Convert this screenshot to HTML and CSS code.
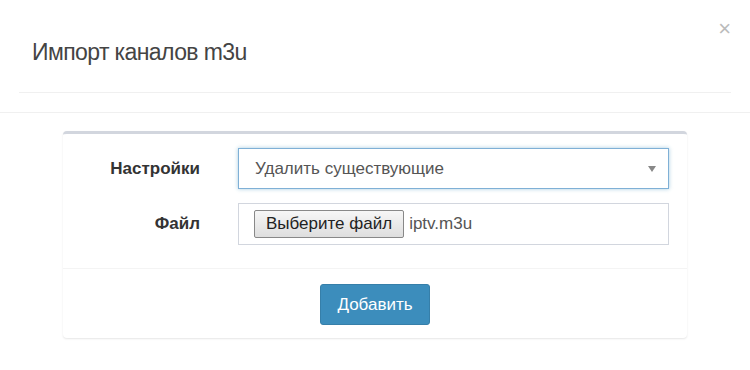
FILE: index.html
```html
<!DOCTYPE html>
<html lang="ru">
  <head>
    <meta charset="UTF-8" />
    <title>Импорт каналов m3u</title>
    <link rel="stylesheet" href="styles.css">
  </head>
  <body>
    <div class="modal">
      <div class="modal-header">
        <h4 class="modal-title">Импорт каналов m3u</h4>
        <button type="button" class="close">&times;</button>
      </div>

      <div class="modal-body">
        <div class="box">
          <div class="box-body">
            <div class="form-row">
              <label class="form-label">Настройки</label>
              <div class="select">
                <span>Удалить существующие</span>
                <span class="caret"></span>
              </div>
            </div>

            <div class="form-row">
              <label class="form-label">Файл</label>
              <div class="file-input">
                <span class="file-button">Выберите файл</span>
                <span class="file-name">iptv.m3u</span>
              </div>
            </div>
          </div>

          <div class="box-footer">
            <button type="submit" class="btn-primary">Добавить</button>
          </div>
        </div>
      </div>
    </div>
  </body>
</html>
```

FILE: styles.css
```css
* {
  margin: 0;
  padding: 0;
  box-sizing: border-box;
}

body {
  font-family: "Liberation Sans", Arial, sans-serif;
  background: #fff;
  color: #333;
  width: 750px;
  height: 370px;
  overflow: hidden;
}

.modal-header {
  position: relative;
  margin: 0 19px;
  padding: 39px 13px 0;
  height: 93px;
  border-bottom: 1px solid #f0f0f0;
}

.modal-title {
  font-size: 23px;
  font-weight: 400;
  color: #444;
  letter-spacing: -0.6px;
}

.close {
  position: absolute;
  top: 18px;
  right: 0;
  border: none;
  background: none;
  font-family: "Liberation Sans", Arial, sans-serif;
  font-size: 22px;
  line-height: 1;
  color: #bbb;
}

.modal-body {
  margin-top: 19px;
  border-top: 1px solid #f0f0f0;
  padding: 18px 63px 0;
}

.box {
  border-top: 3px solid #d2d6de;
  border-radius: 4px;
  background: #fff;
  box-shadow: 0 1px 2px rgba(0, 0, 0, 0.1);
}

.box-body {
  padding: 14px 18px 23px 0;
  display: flex;
  flex-direction: column;
  gap: 14px;
  border-bottom: 1px solid #f4f4f4;
}

.form-row {
  display: flex;
  align-items: center;
}

.form-label {
  width: 137px;
  text-align: right;
  font-size: 17px;
  font-weight: 700;
  color: #333;
  margin-right: 38px;
}

.select {
  flex: 1;
  height: 41px;
  display: flex;
  align-items: center;
  justify-content: space-between;
  padding: 0 12px 0 16px;
  border: 1px solid #7fb0d6;
  box-shadow: 0 0 4px rgba(60, 141, 188, 0.45);
  font-size: 17px;
  color: #555;
}

.caret {
  width: 0;
  height: 0;
  border-left: 4px solid transparent;
  border-right: 4px solid transparent;
  border-top: 6px solid #888;
}

.file-input {
  flex: 1;
  height: 42px;
  display: flex;
  align-items: center;
  padding: 0 15px;
  border: 1px solid #d2d6de;
  font-size: 17px;
  color: #555;
}

.file-button {
  padding: 3px 11px;
  border: 1px solid #888;
  border-radius: 2px;
  background: linear-gradient(#f6f6f6, #dedede);
  color: #222;
  margin-right: 5px;
}

.box-footer {
  display: flex;
  justify-content: center;
  padding: 15px 0 13px;
}

.btn-primary {
  width: 110px;
  height: 41px;
  border: 1px solid #367fa9;
  border-radius: 3px;
  background: #3c8dbc;
  color: #fff;
  font-family: "Liberation Sans", Arial, sans-serif;
  font-size: 17px;
}
```
